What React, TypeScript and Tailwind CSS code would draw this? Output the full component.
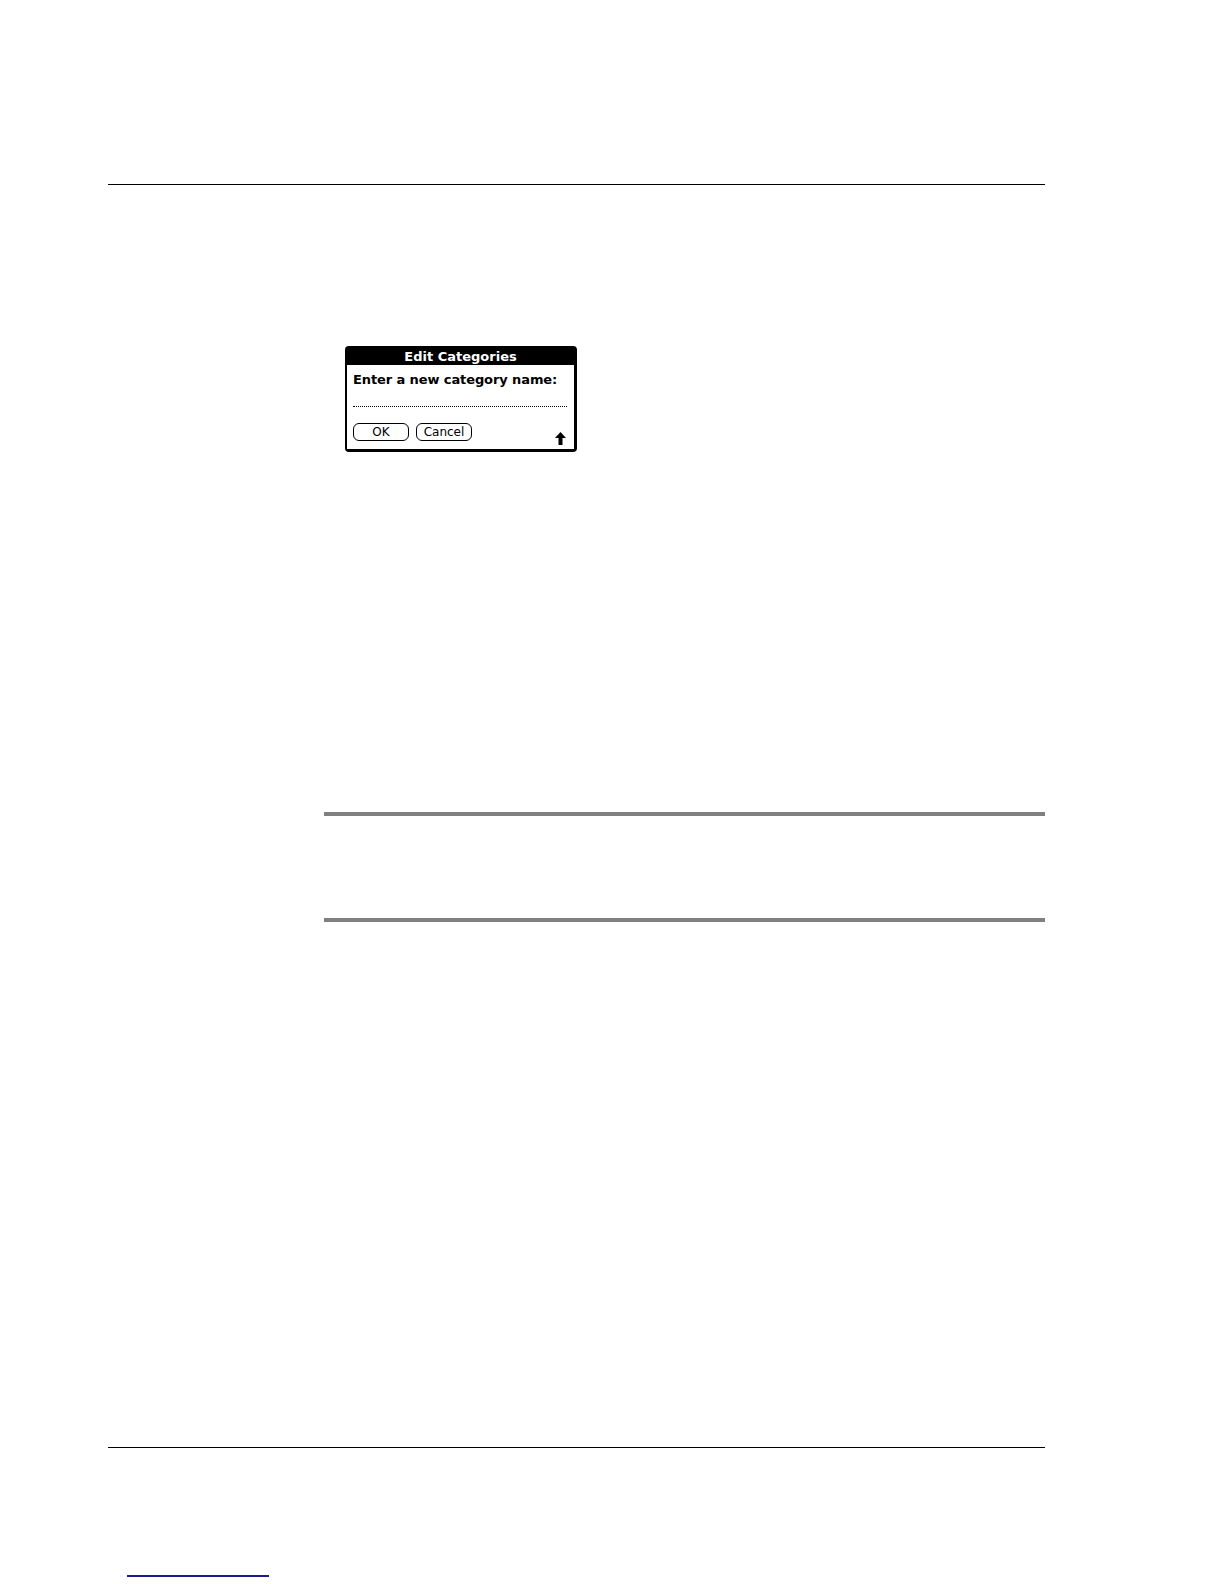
export default function App() {
  return (
    <div className="relative w-[1224px] h-[1584px] bg-white" style={{ fontFamily: '"DejaVu Sans", Verdana, sans-serif' }}>
      {/* header rule */}
      <div className="pt-[184px]">
        <div className="ml-[108px] w-[937px] h-px bg-black" />
      </div>

      {/* Edit Categories dialog */}
      <div className="mt-[161px] ml-[345px] w-[232px] h-[106px] bg-black rounded-[4px] pl-[2px] pr-[3px] pb-[3px] flex flex-col">
        <div className="h-[19px] pt-[1px] flex items-center justify-center text-white font-bold text-[13px] leading-none">
          Edit Categories
        </div>
        <div className="flex-1 bg-white flex flex-col px-[6px]">
          <p className="mt-[7px] text-[13px] leading-[16px] font-bold text-black whitespace-nowrap tracking-[-0.1px]">
            Enter a new category name:
          </p>
          <div className="mt-[18px] w-[214px] border-t border-dotted border-black" />
          <div className="mt-[16px] flex items-start">
            <button className="w-[56px] h-[18px] border-[1.5px] border-black rounded-[6px] text-[12px] leading-none text-black flex items-center justify-center">
              OK
            </button>
            <button className="ml-[7px] w-[56px] h-[18px] border-[1.5px] border-black rounded-[6px] text-[12px] leading-none text-black flex items-center justify-center">
              Cancel
            </button>
            <svg className="ml-auto mr-[2px] mt-[9px]" width="11" height="13" viewBox="0 0 11 13">
              <path d="M5.5 0 L11 6 L7.5 6 L7.5 13 L3.5 13 L3.5 6 L0 6 Z" fill="black" />
            </svg>
          </div>
        </div>
      </div>

      {/* note rules */}
      <div className="mt-[360px] ml-[324px] w-[721px] h-[4px] bg-[#808080]" />
      <div className="mt-[102px] ml-[324px] w-[721px] h-[4px] bg-[#808080]" />

      {/* footer rule */}
      <div className="mt-[525px] ml-[108px] w-[937px] h-px bg-black" />
      <div className="mt-[127px] ml-[127px] w-[142px] h-[2px] bg-[#1c1c8f]" />
    </div>
  );
}
